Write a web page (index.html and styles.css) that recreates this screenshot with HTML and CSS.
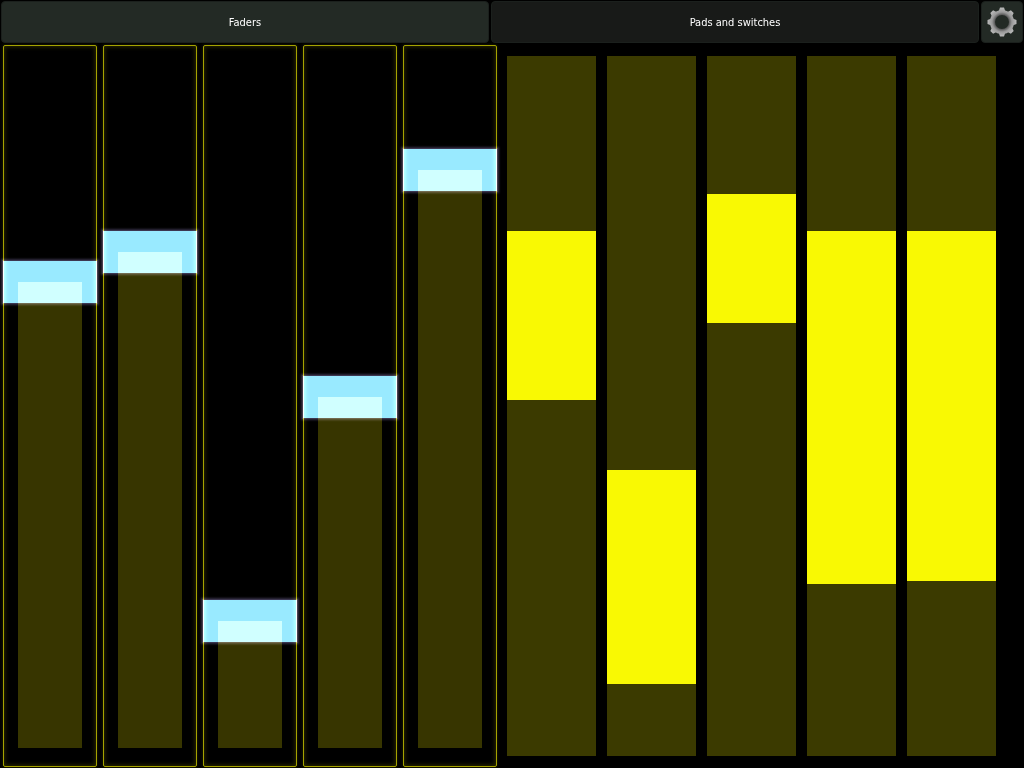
FILE: index.html
```html
<!DOCTYPE html>
<html lang="en">
<head>
<meta charset="utf-8">
<meta name="viewport" content="width=device-width, initial-scale=1">
<title>Faders</title>
<link rel="stylesheet" href="styles.css">
</head>
<body>
<header class="bar">
  <button class="tab tab-active" type="button">Faders</button>
  <button class="tab" type="button">Pads and switches</button>
  <button class="settings" type="button" aria-label="Settings">
    <svg class="gear" viewBox="0 0 30 30" aria-hidden="true">
      <defs>
        <radialGradient id="metal" gradientUnits="userSpaceOnUse" cx="15" cy="15" r="15">
          <stop offset="0.47" stop-color="#555"/>
          <stop offset="0.66" stop-color="#999"/>
          <stop offset="0.9" stop-color="#b4b4b4"/>
        </radialGradient>
      </defs>
      <g fill="url(#metal)">
        <path fill-rule="evenodd" d="M15 2.9a12.1 12.1 0 1 0 0 24.2a12.1 12.1 0 1 0 0-24.2zM15 8a7 7 0 1 1 0 14a7 7 0 1 1 0-14z"/>
        <path d="M11.6 4.4l1.4-3.9h4l1.4 3.9zM11.6 25.6l1.4 3.9h4l1.4-3.9zM4.4 11.6L.5 13v4l3.9 1.4zM25.6 11.6l3.9 1.4v4l-3.9 1.4z"/>
        <path d="M5 9.5L3.3 6.1l2.8-2.8L9.5 5zM25 9.5l1.7-3.4l-2.8-2.8L20.5 5zM5 20.5l-1.7 3.4l2.8 2.8L9.5 25zM25 20.5l1.7 3.4l-2.8 2.8L20.5 25z"/>
      </g>
    </svg>
  </button>
</header>
<main class="board">
  <section class="faders" aria-label="Faders">
    <div class="fader"><div class="travel"><div class="level" style="height:68.1%"></div><div class="cap" style="bottom:68.1%"></div></div><input class="control" type="range" aria-label="Fader 1" value="68"></div>
    <div class="fader"><div class="travel"><div class="level" style="height:72.5%"></div><div class="cap" style="bottom:72.5%"></div></div><input class="control" type="range" aria-label="Fader 2" value="73"></div>
    <div class="fader"><div class="travel"><div class="level" style="height:18.6%"></div><div class="cap" style="bottom:18.6%"></div></div><input class="control" type="range" aria-label="Fader 3" value="19"></div>
    <div class="fader"><div class="travel"><div class="level" style="height:51.3%"></div><div class="cap" style="bottom:51.3%"></div></div><input class="control" type="range" aria-label="Fader 4" value="51"></div>
    <div class="fader"><div class="travel"><div class="level" style="height:84.5%"></div><div class="cap" style="bottom:84.5%"></div></div><input class="control" type="range" aria-label="Fader 5" value="85"></div>
  </section>
  <section class="spans" aria-label="Ranges">
    <div class="span"><div class="extent" style="top:25%;height:24.15%"></div><input class="control" type="range" aria-label="Range 1" value="63"></div>
    <div class="span"><div class="extent" style="top:59.15%;height:30.57%"></div><input class="control" type="range" aria-label="Range 2" value="26"></div>
    <div class="span"><div class="extent" style="top:19.72%;height:18.43%"></div><input class="control" type="range" aria-label="Range 3" value="71"></div>
    <div class="span"><div class="extent" style="top:25%;height:50.43%"></div><input class="control" type="range" aria-label="Range 4" value="50"></div>
    <div class="span"><div class="extent" style="top:25%;height:50%"></div><input class="control" type="range" aria-label="Range 5" value="50"></div>
  </section>
</main>
</body>
</html>
```
FILE: styles.css
```css
* {
  box-sizing: border-box;
}

body {
  display: flex;
  flex-direction: column;
  min-height: 100vh;
  margin: 0;
  background: #000;
  color: #fff;
  font-family: "DejaVu Sans Condensed", "DejaVu Sans", sans-serif;
  font-size: 11px;
}

.bar {
  display: flex;
  gap: 2px;
  padding: 1px 1px 2px;
}

.tab,
.settings {
  height: 42px;
  padding: 0;
  border: 1px solid #1b201d;
  border-radius: 4px;
  background: #181a18;
  color: inherit;
  font: inherit;
}

.tab {
  flex: 1;
}

.tab-active,
.settings {
  background: #232a25;
}

.settings {
  display: grid;
  place-items: center;
  width: 42px;
}

.gear {
  width: 30px;
  height: 30px;
}

.board {
  display: grid;
  flex: 1;
  grid-template-columns: 1fr 1fr;
  padding-right: 24px;
}

.faders,
.spans {
  display: flex;
}

.faders {
  gap: 6px;
  padding: 0 3px 1px;
}

.spans {
  gap: 11px;
  padding: 11px 4px 12px 7px;
}

.fader {
  position: relative;
  display: flex;
  flex: 1;
  padding: 18px 14px;
  border: 1px solid #a5a300;
  border-radius: 2px;
  box-shadow: inset 0 0 4px 1px #2c2b00, 0 0 3px #242300;
}

.travel {
  position: relative;
  display: flex;
  flex: 1;
  align-items: flex-end;
}

.level {
  flex: 1;
  background: #373500;
}

.cap {
  position: absolute;
  right: -15px;
  left: -15px;
  height: 42px;
  background: #99eaff;
  box-shadow: 0 0 0 1px #3c3650, 0 0 2px 2px #322c42;
  transform: translateY(50%);
  mix-blend-mode: plus-lighter;
}

.span {
  position: relative;
  flex: 1;
  background: #3b3a00;
}

.extent {
  position: absolute;
  right: 0;
  left: 0;
  background: #f9f903;
}

.control {
  position: absolute;
  inset: 0;
  width: 100%;
  height: 100%;
  margin: 0;
  opacity: 0;
  writing-mode: vertical-lr;
  direction: rtl;
}
```
